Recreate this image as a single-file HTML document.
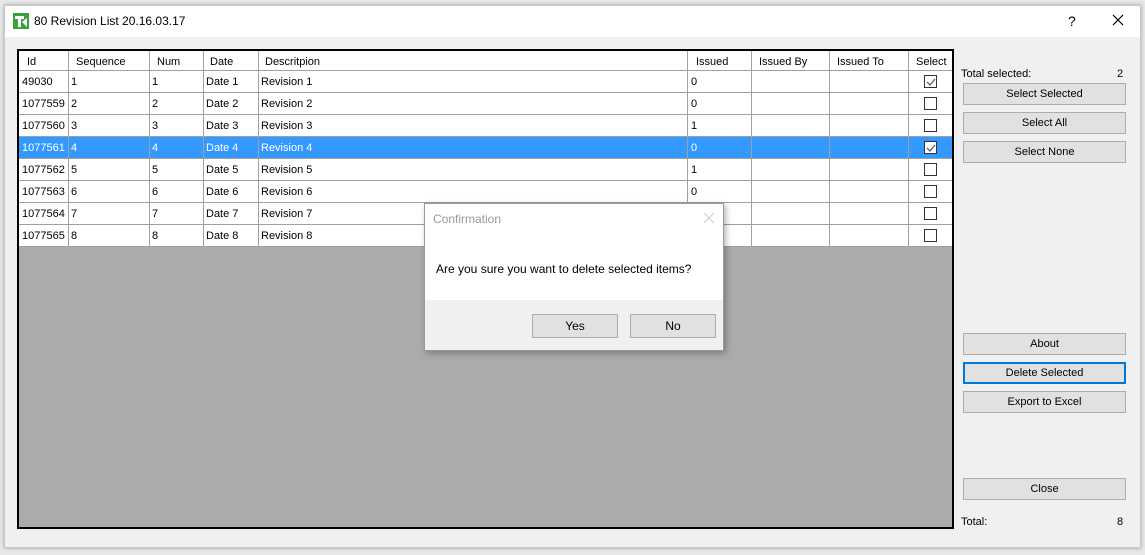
<!DOCTYPE html>
<html><head><style>
*{margin:0;padding:0;box-sizing:border-box}
body{width:1145px;height:555px;background:#e8e8e8;font-family:"Liberation Sans",sans-serif;font-size:11px;color:#000;position:relative;overflow:hidden}
.a{position:absolute}
.win{left:4px;top:5px;width:1137px;height:543px;background:#f0f0f0;border:1px solid #c8c8c8;box-shadow:0 0 4px rgba(0,0,0,.3)}
.title{left:5px;top:6px;width:1135px;height:31px;background:#fff}
.grid{left:17px;top:49px;width:937px;height:480px;border:2px solid #000;background:#ababab}
.row{position:absolute;left:0;width:933px;height:22px;background:#fff;border-bottom:1px solid #a0a0a0}
.row span{position:absolute;top:5px}
.vl{position:absolute;top:0;width:1px;height:22px;background:#a0a0a0}
.sel{background:#3399ff;color:#fff}
.cb{position:absolute;left:905px;top:4px;width:13px;height:13px;border:1px solid #333;background:#fff}
.btn{position:absolute;left:963px;width:163px;height:22px;background:#e1e1e1;border:1px solid #adadad;text-align:center;line-height:21px}
</style></head><body>
<div class="a win"></div>
<div class="a title"></div>
<div class="a" style="left:13px;top:13px;width:16px;height:16px;background:#3ca03c"><svg width="16" height="16"><path d="M2 3h9v3H8v8H5V6H2z" fill="#fff"/><path d="M9 9l5-4v9z" fill="#fff"/></svg></div>
<div class="a" style="left:34px;top:14px;font-size:12px">80 Revision List 20.16.03.17</div>
<div class="a" style="left:1068px;top:13px;font-size:14px">?</div>
<svg class="a" style="left:1112px;top:14px" width="12" height="12"><path d="M1 1L11 11M11 1L1 11" stroke="#000" stroke-width="1.2"/></svg>
<div class="a grid">
<div class="row" style="top:0;height:20px;border-bottom:1px solid #a0a0a0">
<span style="left:8px">Id</span><span style="left:57px">Sequence</span><span style="left:138px">Num</span><span style="left:191px">Date</span><span style="left:246px">Descritpion</span><span style="left:677px">Issued</span><span style="left:740px">Issued By</span><span style="left:818px">Issued To</span><span style="left:897px">Select</span>
</div>
</div>
<div class="a" id="rows" style="left:19px;top:51px"></div>
<div class="a" style="left:961px;top:68px">Total selected:</div><div class="a" style="left:1117px;top:68px">2</div>
<div class="btn" style="top:83px">Select Selected</div>
<div class="btn" style="top:112px">Select All</div>
<div class="btn" style="top:141px">Select None</div>
<div class="btn" style="top:333px">About</div>
<div class="btn" style="top:362px;border:1px solid #0078d7;box-shadow:inset 0 0 0 1px #0078d7">Delete Selected</div>
<div class="btn" style="top:391px">Export to Excel</div>
<div class="btn" style="top:478px">Close</div>
<div class="a" style="left:961px;top:516px">Total:</div><div class="a" style="left:1117px;top:516px">8</div>
<div class="a" style="left:424px;top:203px;width:300px;height:148px;background:#fff;border:1px solid #999;box-shadow:2px 2px 6px rgba(0,0,0,.3)">
<div class="a" style="left:8px;top:8px;color:#999;font-size:12px">Confirmation</div>
<svg class="a" style="left:279px;top:9px" width="10" height="10"><path d="M0 0L10 10M10 0L0 10" stroke="#ccc"/></svg>
<div class="a" style="left:11px;top:58px;font-size:12px">Are you sure you want to delete selected items?</div>
<div class="a" style="left:0;top:96px;width:298px;height:50px;background:#f0f0f0"></div>
<div class="a" style="left:107px;top:110px;width:86px;height:24px;background:#e1e1e1;border:1px solid #adadad;text-align:center;line-height:22px;font-size:12px">Yes</div>
<div class="a" style="left:205px;top:110px;width:86px;height:24px;background:#e1e1e1;border:1px solid #adadad;text-align:center;line-height:22px;font-size:12px">No</div>
</div>
<script>
var ids=[49030,1077559,1077560,1077561,1077562,1077563,1077564,1077565],iss=[0,0,1,0,1,0],h='';
var cols=[49,130,184,239,668,732,810,889];
for(var i=0;i<8;i++){var t=20+i*22;var s=i==3?' sel':'';
h+='<div class="row'+s+'" style="top:'+t+'px">';
h+='<span style="left:3px">'+ids[i]+'</span><span style="left:52px">'+(i+1)+'</span><span style="left:133px">'+(i+1)+'</span><span style="left:187px">Date '+(i+1)+'</span><span style="left:242px">Revision '+(i+1)+'</span>';
if(i<6)h+='<span style="left:672px">'+iss[i]+'</span>';
cols.forEach(function(c){h+='<div class="vl" style="left:'+c+'px"></div>'});
h+='<div class="cb">'+((i==0||i==3)?'<svg width="11" height="11" style="position:absolute;left:0;top:0"><path d="M2 6l3 3 5-6" stroke="#555" fill="none" stroke-width="1.2"/></svg>':'')+'</div></div>';}
document.getElementById('rows').innerHTML=h;
var hd='';cols.forEach(function(c){hd+='<div class="vl" style="left:'+c+'px;height:20px;top:0"></div>'});
document.querySelector('.grid .row').insertAdjacentHTML('beforeend',hd);
</script>
</body></html>
